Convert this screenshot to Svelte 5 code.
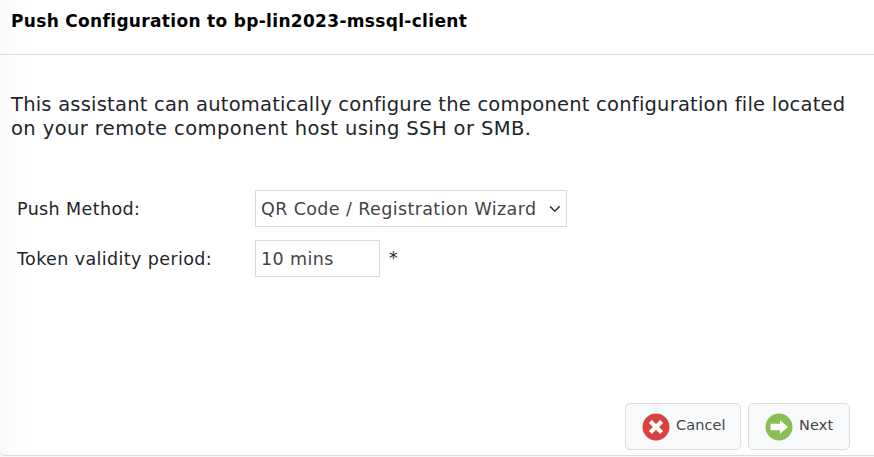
<script>
	let { host = 'bp-lin2023-mssql-client' } = $props();

	let method = $state('qr');
	let validity = $state('10 mins');
</script>

<section class="dialog">
	<header>
		<h1>Push Configuration to {host}</h1>
	</header>

	<form onsubmit={(e) => e.preventDefault()}>
		<p class="intro">
			<span class="line first">This assistant can automatically configure the component configuration file located</span>
			<span class="line second">on your remote component host using SSH or SMB.</span>
		</p>

		<div class="row">
			<label for="method">Push Method:</label>
			<div class="select">
				<select id="method" bind:value={method}>
					<option value="qr">QR Code / Registration Wizard</option>
				</select>
				<svg class="chevron" width="12" height="8" viewBox="0 0 12 8" aria-hidden="true">
					<path d="m1 1.4 4.8 4.8 4.8-4.8" fill="none" stroke="#3c3c3c" stroke-width="1.6" />
				</svg>
			</div>
		</div>

		<div class="row">
			<label for="validity">Token validity period:</label>
			<input id="validity" type="text" bind:value={validity} />
			<span class="required">*</span>
		</div>

		<footer>
			<button class="cancel" type="button">
				<svg width="28" height="28" viewBox="0 0 28 28" aria-hidden="true">
					<circle cx="14" cy="14" r="13.5" fill="#d9433f" />
					<path d="m8.4 8.4 11.2 11.2m0-11.2L8.4 19.6" stroke="#fff" stroke-width="4.2" />
				</svg>
				<span>Cancel</span>
			</button>
			<button class="next" type="submit">
				<svg width="28" height="28" viewBox="0 0 28 28" aria-hidden="true">
					<circle cx="14" cy="14" r="13.5" fill="#88bf55" />
					<path d="M5.5 10.8h9.5V7.2l8 6.8-8 6.8v-3.6H5.5z" fill="#fff" />
				</svg>
				<span>Next</span>
			</button>
		</footer>
	</form>
</section>

<style>
	:global(body) {
		margin: 0;
		background: #f7f5f6;
	}
	.dialog {
		box-sizing: border-box;
		display: flex;
		flex-direction: column;
		width: 874px;
		height: 456px;
		border-bottom: 1px solid #ded9db;
		border-bottom-left-radius: 5px;
		background: linear-gradient(90deg, #f9f9f9, #fefefe 20px, #fefefe 25px, #fff 25px);
		color: #212529;
		font-family: Verdana, 'DejaVu Sans', sans-serif;
		overflow: hidden;
	}
	header {
		box-sizing: border-box;
		height: 55px;
		padding: 9px 11px 0;
		border-bottom: 1px solid #dfd9dc;
	}
	h1 {
		margin: 0;
		color: #000;
		font-size: 17px;
		line-height: 24px;
		letter-spacing: 0.32px;
		white-space: nowrap;
	}
	form {
		display: flex;
		flex: 1;
		flex-direction: column;
	}
	.intro {
		margin: 38px 11px 49px;
		font-size: 19.5px;
		line-height: 24px;
		white-space: nowrap;
	}
	.line {
		display: block;
	}
	.first {
		letter-spacing: 0.22px;
	}
	.second {
		letter-spacing: 0.41px;
	}
	.row {
		display: flex;
		align-items: center;
		height: 37px;
		margin-bottom: 13px;
		padding-left: 17px;
		font-size: 17.5px;
		letter-spacing: 0.39px;
	}
	.row label {
		width: 238px;
		white-space: nowrap;
	}
	.select {
		position: relative;
	}
	select,
	input {
		box-sizing: border-box;
		display: block;
		height: 37px;
		margin: 0;
		padding: 0 5px;
		border: 1px solid #dadada;
		border-radius: 0;
		background: #fff;
		color: #444;
		font: inherit;
		letter-spacing: inherit;
		appearance: none;
	}
	select {
		width: 312px;
	}
	input {
		width: 125px;
	}
	.chevron {
		position: absolute;
		top: 15px;
		right: 6px;
		pointer-events: none;
	}
	.required {
		margin: -2px 0 0 9px;
	}
	footer {
		display: flex;
		justify-content: flex-end;
		gap: 7px;
		margin-top: auto;
		padding: 0 24px 5px 0;
	}
	button {
		box-sizing: border-box;
		display: flex;
		align-items: center;
		height: 47px;
		padding: 0 0 0 16px;
		border: 1px solid #dcdcdc;
		border-radius: 5px;
		background: #f8f9fb;
		color: #444;
		font: 14.5px Verdana, 'DejaVu Sans', sans-serif;
		letter-spacing: 0.1px;
	}
	button span {
		margin: -3px 0 0 6px;
	}
	.cancel {
		width: 116px;
	}
	.next {
		width: 102px;
	}
</style>
